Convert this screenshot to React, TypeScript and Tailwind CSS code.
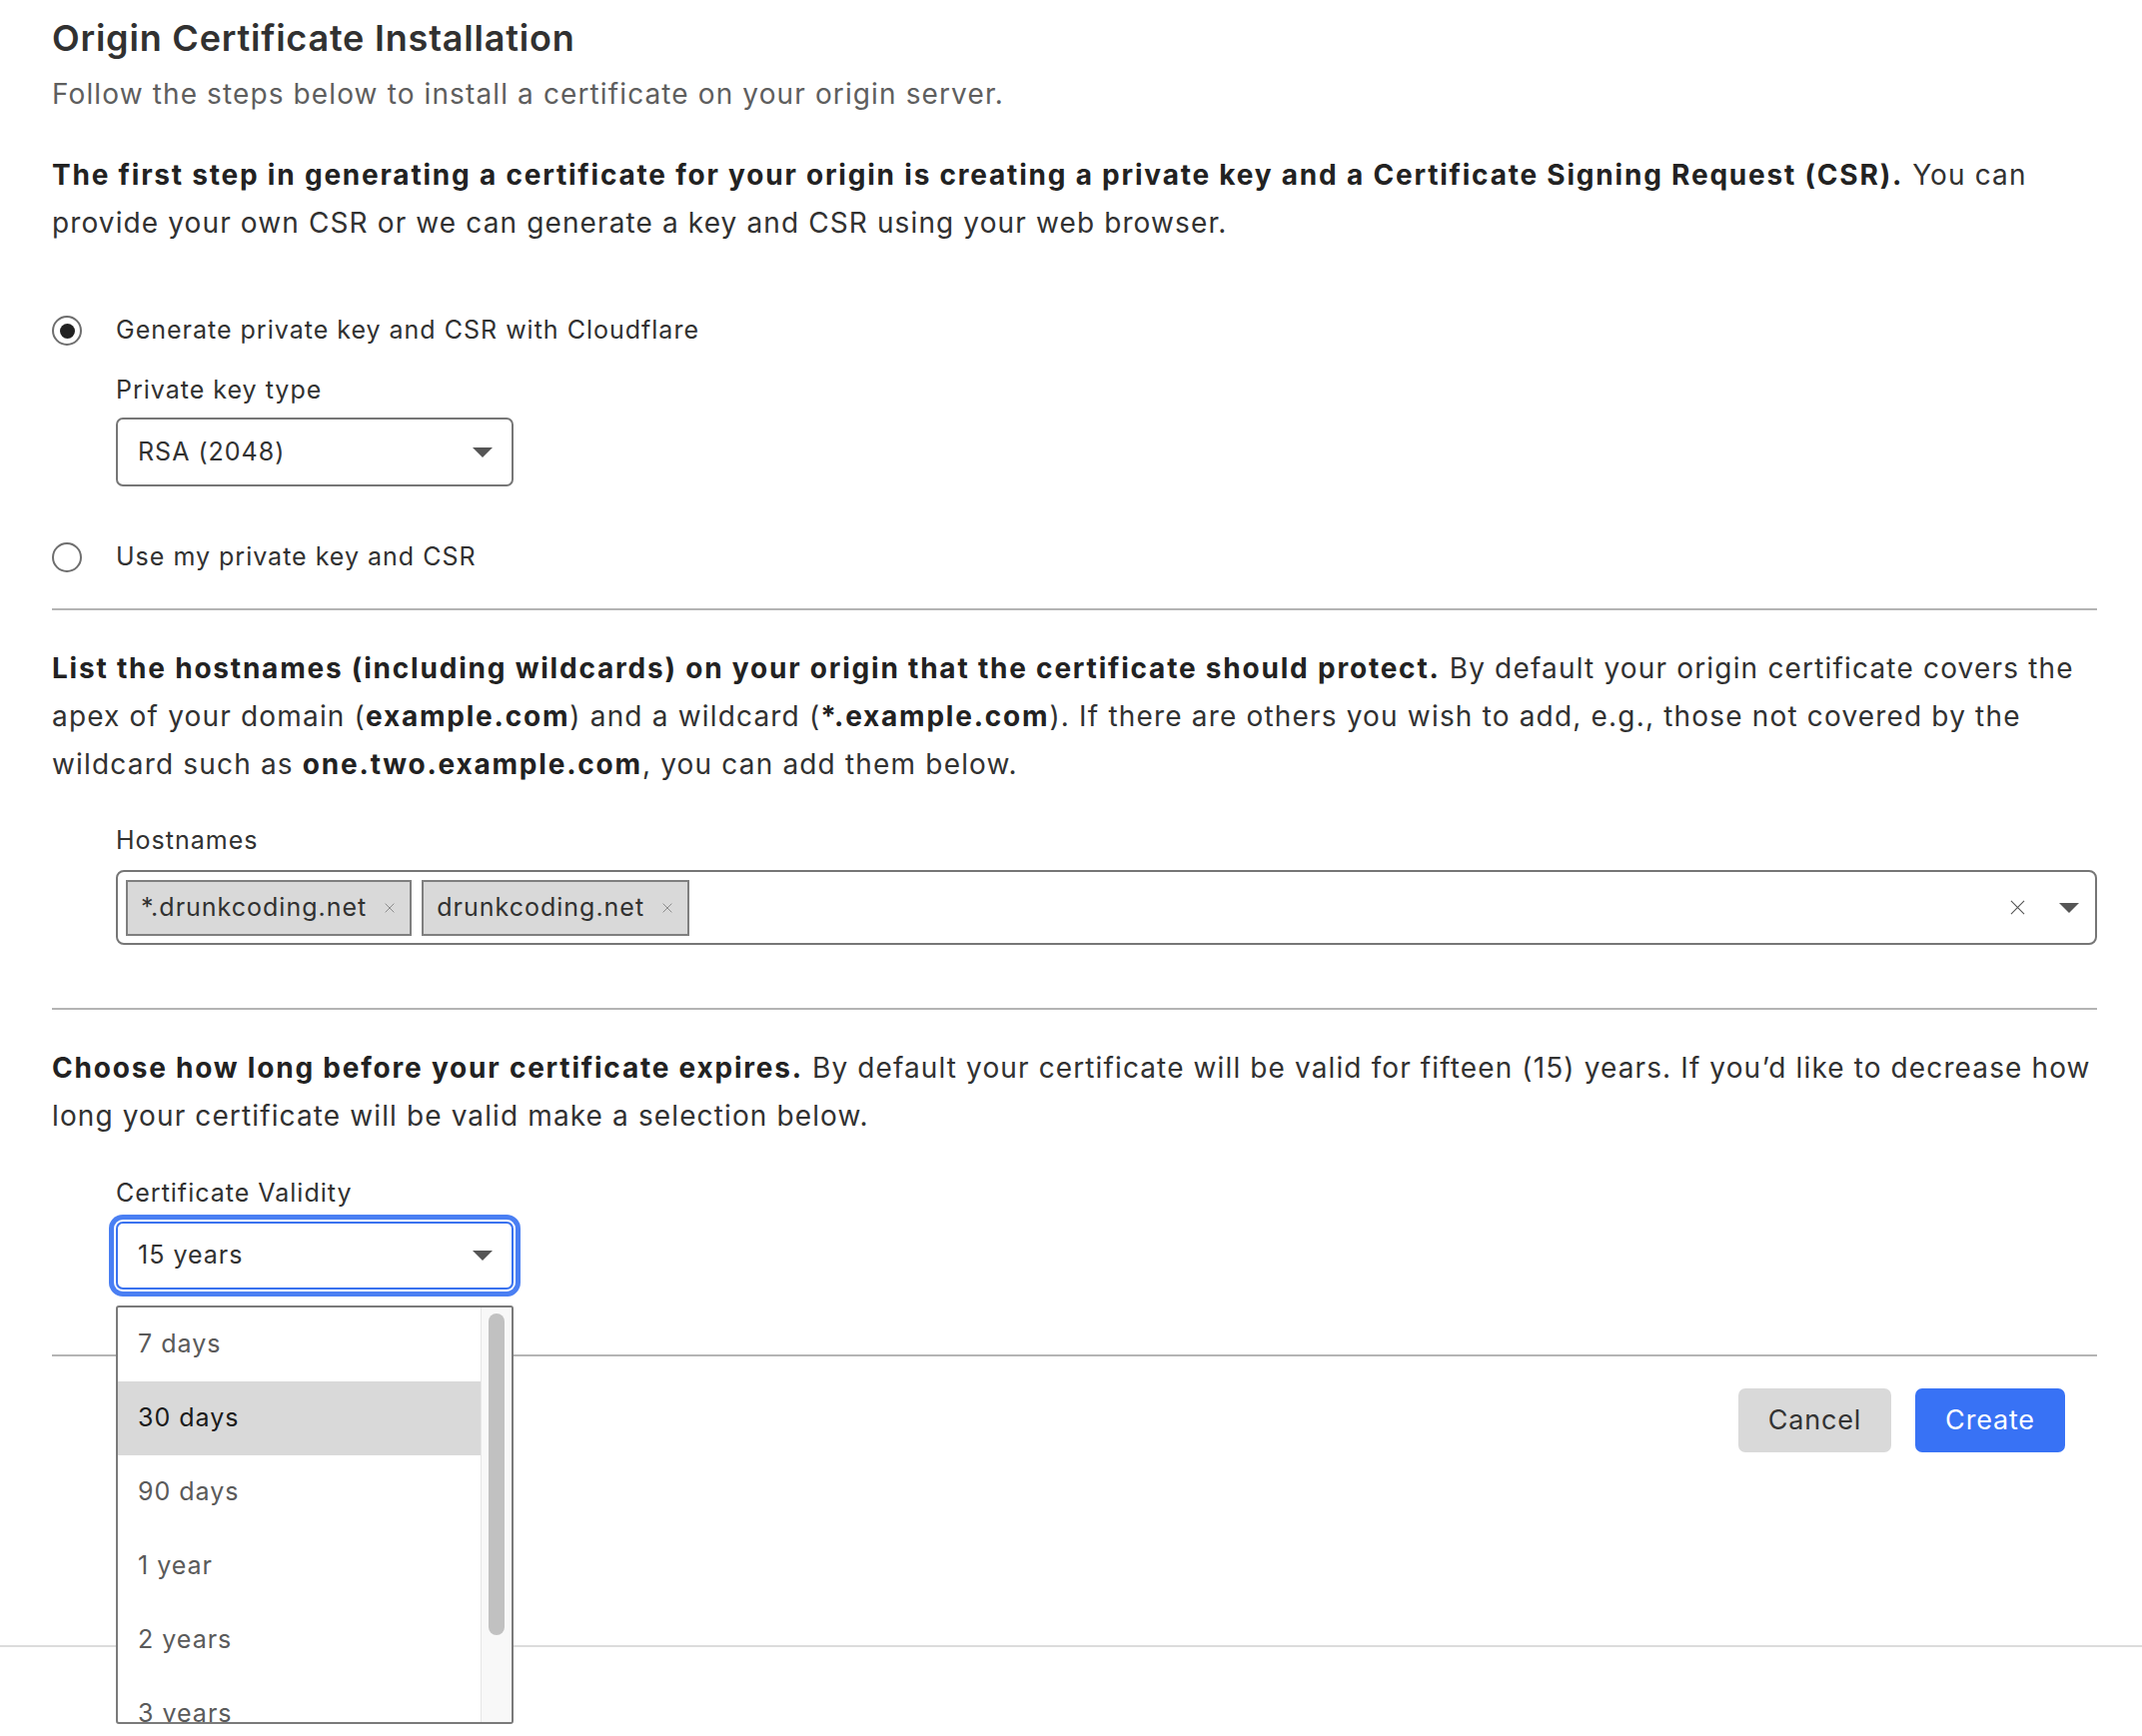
import React from "react";

const options = ["7 days", "30 days", "90 days", "1 year", "2 years", "3 years", "15 years"];

function Caret() {
  return (
    <svg width="20" height="10" viewBox="0 0 20 10" className="shrink-0">
      <path d="M0 0 L20 0 L10 10 Z" fill="#555" />
    </svg>
  );
}

function Cross({ size, color, stroke }: { size: number; color: string; stroke: number }) {
  return (
    <svg width={size} height={size} viewBox="0 0 16 16" className="shrink-0">
      <path d="M1 1 L15 15 M15 1 L1 15" stroke={color} strokeWidth={stroke} fill="none" />
    </svg>
  );
}

function Radio({ checked, label }: { checked?: boolean; label: string }) {
  return (
    <label className="flex items-center gap-[34px] h-[40px]">
      <span className="w-[30px] h-[30px] rounded-full border-2 border-[#6e6e6e] flex items-center justify-center">
        {checked && <span className="w-[15px] h-[15px] rounded-full bg-[#222]" />}
      </span>
      <span className="text-[25px] tracking-[0.04em] text-[#313131]">{label}</span>
    </label>
  );
}

function Chip({ text }: { text: string }) {
  return (
    <div className="h-[56px] flex items-center gap-[18px] pl-[13px] pr-[15px] bg-[#d9d9d9] border-2 border-[#7f7f7f]">
      <span className="text-[25px] tracking-[0.04em] text-[#313131]">{text}</span>
      <Cross size={10} color="#7a7a7a" stroke={1.3} />
    </div>
  );
}

function B({ children }: { children: React.ReactNode }) {
  return <strong className="font-bold tracking-[0.064em] text-[#222]">{children}</strong>;
}

export default function App() {
  return (
    <div className="min-h-screen bg-white font-['Inter','Noto_Sans',sans-serif] text-[#313131]">
      <div className="pl-[52px] pr-[45px] pt-[17px]">
        <h1 className="text-[36px] leading-[43px] tracking-[0.022em] font-semibold text-[#313131]">
          Origin Certificate Installation
        </h1>
        <p className="mt-[14px] text-[28px] leading-[40px] tracking-[0.04em] text-[#5e5e5e]">
          Follow the steps below to install a certificate on your origin server.
        </p>

        <p className="mt-[37px] text-[28px] leading-[48px] tracking-[0.04em] whitespace-nowrap">
          <B>
            The first step in generating a certificate for your origin is creating a private key and a
            Certificate Signing Request (CSR).
          </B>{" "}
          You can
          <br />
          provide your own CSR or we can generate a key and CSR using your web browser.
        </p>

        <div className="mt-[64px]">
          <Radio checked label="Generate private key and CSR with Cloudflare" />
          <div className="pl-[64px] mt-[21px]">
            <div className="text-[25px] leading-[36px] tracking-[0.04em]">Private key type</div>
            <div className="mt-[10px] w-[398px] h-[69px] rounded-[7px] border-2 border-[#767676] flex items-center justify-between pl-[20px] pr-[19px]">
              <span className="text-[25px] tracking-[0.04em] text-[#313131]">RSA (2048)</span>
              <Caret />
            </div>
          </div>
          <div className="mt-[51px]">
            <Radio label="Use my private key and CSR" />
          </div>
        </div>

        <div className="mt-[31px] h-[2px] bg-[#b4b4b4]" />

        <p className="mt-[34px] text-[28px] leading-[48px] tracking-[0.042em] whitespace-nowrap">
          <B>List the hostnames (including wildcards) on your origin that the certificate should protect.</B> By
          default your origin certificate covers the
          <br />
          apex of your domain (<B>example.com</B>) and a wildcard (<B>*.example.com</B>). If there are others you
          wish to add, e.g., those not covered by the
          <br />
          wildcard such as <B>one.two.example.com</B>, you can add them below.
        </p>

        <div className="pl-[64px] mt-[34px]">
          <div className="text-[25px] leading-[36px] tracking-[0.04em]">Hostnames</div>
          <div className="mt-[12px] h-[75px] rounded-[8px] border-2 border-[#767676] flex items-center pl-[8px] pr-[16px]">
            <div className="flex items-center gap-[10px] flex-1">
              <Chip text="*.drunkcoding.net" />
              <Chip text="drunkcoding.net" />
            </div>
            <div className="flex items-center gap-[34px]">
              <Cross size={15} color="#555" stroke={1.2} />
              <Caret />
            </div>
          </div>
        </div>

        <div className="mt-[63px] h-[2px] bg-[#b4b4b4]" />

        <p className="mt-[34px] text-[28px] leading-[48px] tracking-[0.04em] whitespace-nowrap">
          <B>Choose how long before your certificate expires.</B> By default your certificate will be valid for
          fifteen (15) years. If you’d like to decrease how
          <br />
          long your certificate will be valid make a selection below.
        </p>

        <div className="pl-[64px] mt-[35px]">
          <div className="text-[25px] leading-[36px] tracking-[0.04em]">Certificate Validity</div>
          <div className="relative mt-[11px] w-[398px]">
            <div className="h-[68px] rounded-[7px] border-2 border-[#3a72ef] shadow-[0_0_0_2px_#fff,0_0_0_7px_#4a7ff3] flex items-center justify-between pl-[20px] pr-[19px]">
              <span className="text-[25px] tracking-[0.04em] text-[#313131]">15 years</span>
              <Caret />
            </div>

            <div className="absolute z-10 left-0 top-[84px] w-[398px] h-[419px] bg-white border-2 border-[#7a7a7a] rounded-[3px] overflow-hidden flex">
              <ul className="flex-1">
                {options.map((o) => (
                  <li
                    key={o}
                    className={
                      o === "30 days"
                        ? "h-[74px] flex items-center pl-[20px] text-[25px] tracking-[0.04em] bg-[#d9d9d9] text-[#1a1a1a]"
                        : "h-[74px] flex items-center pl-[20px] text-[25px] tracking-[0.04em] text-[#5a5a5a]"
                    }
                  >
                    {o}
                  </li>
                ))}
              </ul>
              <div className="w-[31px] bg-[#f8f8f8] border-l border-[#e6e6e6] pt-[6px] flex justify-center">
                <div className="w-[16px] h-[322px] rounded-full bg-[#c1c1c1]" />
              </div>
            </div>
          </div>
        </div>

        <div className="mt-[65px] h-[2px] bg-[#b4b4b4]" />

        <div className="mt-[32px] flex justify-end gap-[24px] pr-[32px]">
          <button className="h-[64px] w-[153px] rounded-[7px] bg-[#d9d9d9] text-[27px] tracking-[0.03em] text-[#333]">
            Cancel
          </button>
          <button className="h-[64px] w-[150px] rounded-[7px] bg-[#3872f5] text-[27px] tracking-[0.03em] text-white">
            Create
          </button>
        </div>
      </div>

      <div className="mt-[193px] h-[2px] bg-[#dcdcdc]" />
    </div>
  );
}
